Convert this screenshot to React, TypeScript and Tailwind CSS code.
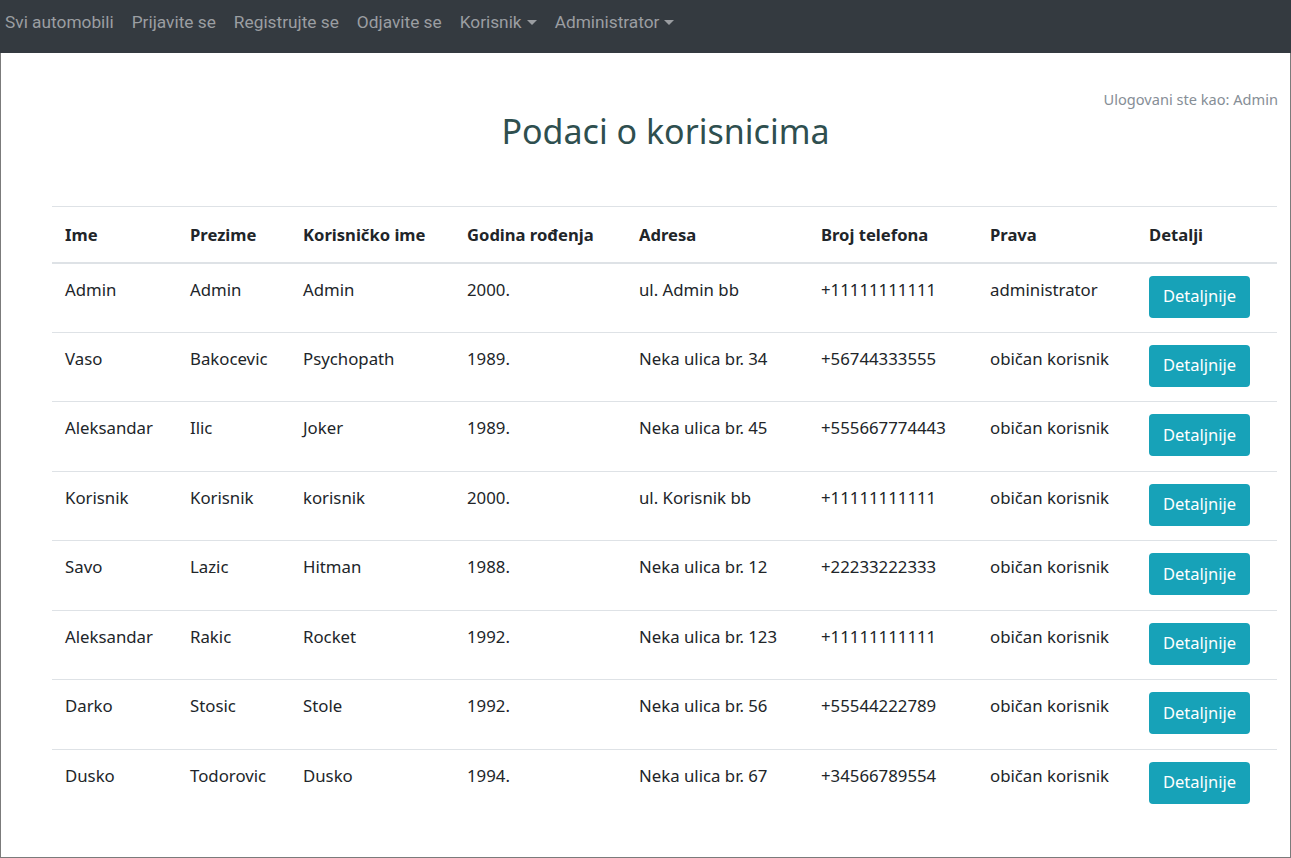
import React from "react";

const rows = [
  ["Admin", "Admin", "Admin", "2000.", "ul. Admin bb", "+11111111111", "administrator"],
  ["Vaso", "Bakocevic", "Psychopath", "1989.", "Neka ulica br. 34", "+56744333555", "običan korisnik"],
  ["Aleksandar", "Ilic", "Joker", "1989.", "Neka ulica br. 45", "+555667774443", "običan korisnik"],
  ["Korisnik", "Korisnik", "korisnik", "2000.", "ul. Korisnik bb", "+11111111111", "običan korisnik"],
  ["Savo", "Lazic", "Hitman", "1988.", "Neka ulica br. 12", "+22233222333", "običan korisnik"],
  ["Aleksandar", "Rakic", "Rocket", "1992.", "Neka ulica br. 123", "+11111111111", "običan korisnik"],
  ["Darko", "Stosic", "Stole", "1992.", "Neka ulica br. 56", "+55544222789", "običan korisnik"],
  ["Dusko", "Todorovic", "Dusko", "1994.", "Neka ulica br. 67", "+34566789554", "običan korisnik"],
];

const headers = ["Ime", "Prezime", "Korisničko ime", "Godina rođenja", "Adresa", "Broj telefona", "Prava", "Detalji"];
const widths = [125, 113, 164, 172, 182, 169, 159, 141];

function Caret() {
  return (
    <span className="ml-[5px] inline-block align-[3px] border-x-[5px] border-t-[5px] border-x-transparent border-t-[#9a9da1]" />
  );
}

export default function App() {
  return (
    <div className="w-[1291px] h-[858px] bg-white text-[#212529]" style={{ fontFamily: "'Noto Sans', sans-serif" }}>
      <nav className="h-[53px] bg-[#343a40] flex items-start pt-[10px] pl-[5px] text-[17.3px] leading-6 text-[#9b9ea2]" style={{ fontFamily: "Roboto, sans-serif" }}>
        <span className="mr-[18px]">Svi automobili</span>
        <span className="mr-[18px]">Prijavite se</span>
        <span className="mr-[18px]">Registrujte se</span>
        <span className="mr-[18px]">Odjavite se</span>
        <span className="mr-[18px]">Korisnik<Caret /></span>
        <span>Administrator<Caret /></span>
      </nav>
      <main className="h-[805px] border-x border-b border-[#7b7b7b]">
        <div className="pt-[34px] pr-[12px] text-right text-[14.6px] leading-6 text-[#868e96]">Ulogovani ste kao: Admin</div>
        <h2 className="text-center text-[34px] leading-[42px] text-[#2f4f4f] pl-[40px] mt-[-1px]">Podaci o korisnicima</h2>
        <table className="ml-[51px] mt-[54px] border-collapse text-[16.8px]" style={{ width: 1225 }}>
          <colgroup>
            {widths.map((w, i) => (
              <col key={i} style={{ width: w }} />
            ))}
          </colgroup>
          <thead>
            <tr className="h-[56px] border-t border-b-2 border-[#dee2e6]">
              {headers.map((h) => (
                <th key={h} className="text-left font-bold text-[16.6px] px-[13px] pt-[2px] align-middle leading-6">{h}</th>
              ))}
            </tr>
          </thead>
          <tbody>
            {rows.map((r, i) => (
              <tr key={i} className={i > 0 ? "border-t border-[#dee2e6] h-[69.5px]" : "h-[69.5px]"}>
                {r.map((c, j) => (
                  <td key={j} className="px-[13px] pt-[14px] align-top leading-6">{c}</td>
                ))}
                <td className="px-[13px] pt-[12px] align-top">
                  <button className="h-[42px] w-[101px] rounded-[4px] bg-[#17a2b8] text-white text-[16.5px]">Detaljnije</button>
                </td>
              </tr>
            ))}
          </tbody>
        </table>
      </main>
    </div>
  );
}
